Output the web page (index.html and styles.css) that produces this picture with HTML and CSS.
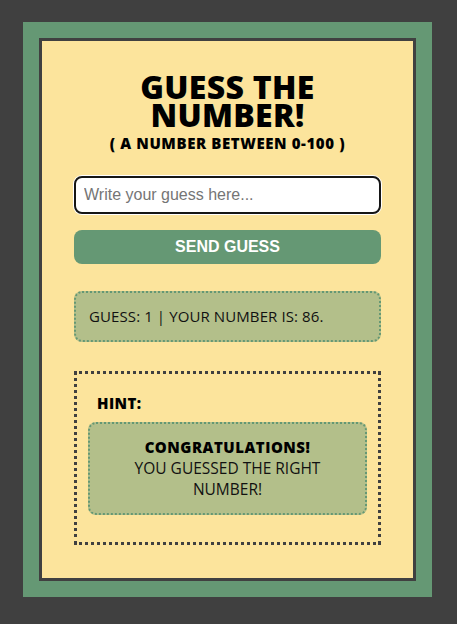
FILE: index.html
```html
<!DOCTYPE html>
<html lang="en">
<head>
<meta charset="utf-8">
<title>Guess the Number</title>
<link rel="stylesheet" href="styles.css">
</head>
<body>
  <div class="frame">
    <main class="card">
      <h1 class="title">GUESS THE NUMBER!</h1>
      <p class="subtitle">( A NUMBER BETWEEN 0-100 )</p>
      <input class="guess-input" type="text" placeholder="Write your guess here...">
      <button class="send-btn" type="button">SEND GUESS</button>
      <div class="result">GUESS: 1 | YOUR NUMBER IS: 86.</div>
      <section class="hint">
        <h2 class="hint-label">HINT:</h2>
        <div class="hint-box">
          <strong class="hint-title">CONGRATULATIONS!</strong>
          <span class="hint-text">YOU GUESSED THE RIGHT NUMBER!</span>
        </div>
      </section>
    </main>
  </div>
</body>
</html>
```

FILE: styles.css
```css
* { box-sizing: border-box; }

html, body {
  margin: 0;
  background: #404040;
}

body {
  padding: 22px 0 0 23px;
  font-family: "Open Sans", "Noto Sans", sans-serif;
  color: #111;
}

.frame {
  width: 409px;
  height: 575px;
  background: #659874;
  padding: 16px;
}

.card {
  height: 100%;
  background: #fce49c;
  border: 3px solid #404040;
  padding: 32px 32px 0;
  display: flex;
  flex-direction: column;
}

.title {
  margin: 0;
  text-align: center;
  font-size: 32px;
  font-weight: 800;
  line-height: 28px;
  letter-spacing: 0.3px;
  color: #000;
  padding: 0 40px;
}

.subtitle {
  margin: 4px 0 0;
  text-align: center;
  font-size: 15px;
  font-weight: 800;
  line-height: 20px;
  letter-spacing: 0.6px;
  color: #000;
}

.guess-input {
  margin-top: 23px;
  width: 100%;
  height: 38px;
  border: 2px solid #161616;
  border-radius: 8px;
  box-shadow: 0 0 0 1px #ffffff;
  background: #fff;
  padding: 0 8px;
  font-family: "Liberation Sans", Arial, sans-serif;
  font-size: 16px;
  outline: none;
}

.guess-input::placeholder {
  color: #757575;
}

.send-btn {
  margin-top: 16px;
  width: 100%;
  height: 34px;
  border: none;
  border-radius: 8px;
  background: #659874;
  color: #fff;
  font-family: "Liberation Sans", Arial, sans-serif;
  font-weight: bold;
  font-size: 16px;
  padding: 0;
}

.result {
  margin-top: 27px;
  height: 51px;
  background: #b3bf8a;
  border: 2px dotted #659874;
  border-radius: 8px;
  padding: 0 13px;
  display: flex;
  align-items: center;
  font-size: 15px;
  line-height: 21px;
  letter-spacing: 0.1px;
  color: #111;
}

.hint {
  margin-top: 29px;
  border: 3px dotted #404040;
  padding: 19px 11px 27px;
}

.hint-label {
  margin: 0 0 8px 9px;
  font-size: 15px;
  font-weight: 800;
  line-height: 21px;
  letter-spacing: 0.4px;
  color: #000;
}

.hint-box {
  background: #b3bf8a;
  border: 2px dotted #659874;
  border-radius: 8px;
  padding: 13px 24px;
  text-align: center;
  font-size: 15.5px;
  line-height: 21px;
  color: #111;
  display: flex;
  flex-direction: column;
}

.hint-title {
  font-weight: 800;
  font-size: 15px;
  letter-spacing: 0.5px;
  color: #000;
}
```
